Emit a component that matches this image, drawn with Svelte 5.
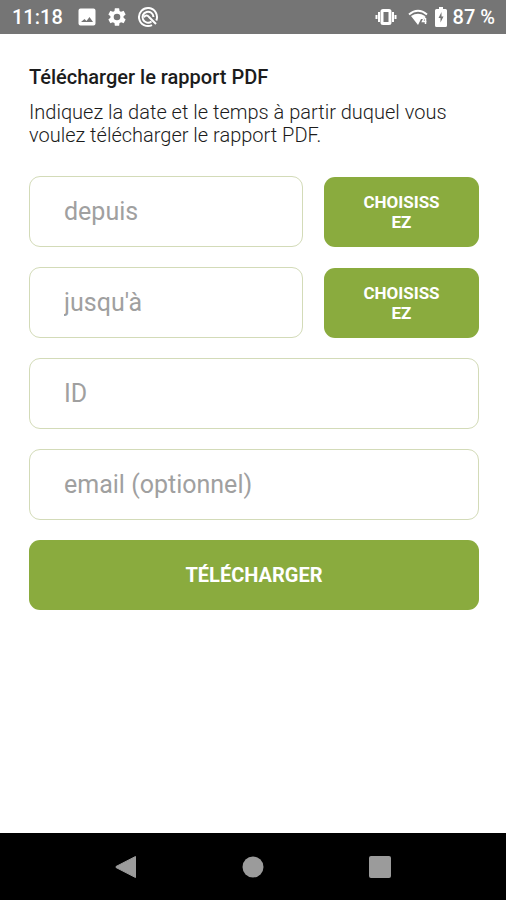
<script lang="ts">
    let from = $state("");
    let to = $state("");
    let id = $state("");
    let email = $state("");
</script>

<div class="screen">
    <header class="status-bar">
        <span class="time">11:18</span>
        <div class="notifications">
            <svg width="20" height="20" viewBox="0 0 20 20" aria-hidden="true">
                <path
                    fill="#fff"
                    fill-rule="evenodd"
                    d="M3.500 1.500h13a2 2 0 0 1 2 2v13a2 2 0 0 1-2 2h-13a2 2 0 0 1-2-2v-13a2 2 0 0 1 2-2zM4 15h12l-3.500-5-3 4-2-2z"
                />
            </svg>
            <svg width="22" height="22" viewBox="0 0 24 24" aria-hidden="true">
                <path
                    fill="#fff"
                    d="M19.14 12.94c.04-.3.06-.61.06-.94s-.02-.64-.07-.94l2.03-1.58a.49.49 0 0 0 .12-.61l-1.92-3.32a.49.49 0 0 0-.59-.22l-2.39.96c-.5-.38-1.03-.7-1.62-.94l-.36-2.54a.48.48 0 0 0-.48-.41h-3.84c-.24 0-.43.17-.47.41l-.36 2.54c-.59.24-1.13.57-1.62.94l-2.39-.96a.48.48 0 0 0-.59.22L2.74 8.87a.47.47 0 0 0 .12.61l2.03 1.58c-.05.3-.09.63-.09.94s.02.64.07.94l-2.03 1.58a.49.49 0 0 0-.12.61l1.92 3.32c.12.22.37.29.59.22l2.39-.96c.5.38 1.03.7 1.62.94l.36 2.54c.05.24.24.41.48.41h3.84c.24 0 .44-.17.47-.41l.36-2.54c.59-.24 1.13-.56 1.62-.94l2.39.96c.22.08.47 0 .59-.22l1.92-3.32a.47.47 0 0 0-.12-.61zM12 15.6a3.6 3.6 0 1 1 0-7.2 3.6 3.6 0 0 1 0 7.2z"
                />
            </svg>
            <svg width="22" height="22" viewBox="0 0 22 22" aria-hidden="true">
                <g fill="none" stroke="#fff" stroke-width="2">
                    <path d="M15 19.1A9 9 0 1 1 19.3 14.5" />
                    <path d="M14.5 15.5A5.5 5.5 0 1 1 16.5 11" />
                    <path d="M7 11.5c1-2.5 3.500-2.500 5-.5l7 7" />
                </g>
            </svg>
        </div>
        <div class="system">
            <svg class="vibrate" width="22" height="20" viewBox="0 0 22 20" aria-hidden="true">
                <rect x="7" y="3.500" width="8" height="13" rx="1" fill="none" stroke="#fff" stroke-width="3" />
                <path d="M4 5v10M18 5v10M1.500 8v4M20.500 8v4" stroke="#fff" stroke-width="2" />
            </svg>
            <svg class="wifi" width="22" height="20" viewBox="0 0 22 20" aria-hidden="true">
                <path d="M2 7.500Q11 0 20 7.500" fill="none" stroke="#fff" stroke-width="2" />
                <path d="M4 9Q11 4.500 18 9L16 12h-2l-3 6z" fill="#fff" />
                <path d="M18 9.500L15.500 14.500h4M18.500 11v6" fill="none" stroke="#fff" stroke-width="1.5" />
            </svg>
            <svg width="12" height="20" viewBox="0 0 12 20" aria-hidden="true">
                <path fill="#fff" d="M4 0h4v2h2.500Q12 2 12 3.500v15Q12 20 10.500 20h-9Q0 20 0 18.500v-15Q0 2 1.500 2H4z" />
                <path fill="#757575" d="M6.500 5L3.500 11h2v4.500L8.500 9.500h-2z" />
            </svg>
            <span>87 %</span>
        </div>
    </header>

    <main>
        <h1>Télécharger le rapport PDF</h1>
        <p>Indiquez la date et le temps à partir duquel vous voulez télécharger le rapport PDF.</p>

        <form onsubmit={(e) => e.preventDefault()}>
            <div class="row">
                <input type="text" bind:value={from} placeholder="depuis" aria-label="depuis" />
                <button type="button" class="choose">CHOISISSEZ</button>
            </div>
            <div class="row">
                <input type="text" bind:value={to} placeholder="jusqu'à" aria-label="jusqu'à" />
                <button type="button" class="choose">CHOISISSEZ</button>
            </div>
            <input type="text" bind:value={id} placeholder="ID" aria-label="ID" />
            <input type="email" bind:value={email} placeholder="email (optionnel)" aria-label="email (optionnel)" />
            <button type="submit" class="submit">TÉLÉCHARGER</button>
        </form>
    </main>

    <nav>
        <button type="button" aria-label="Retour">
            <svg width="24" height="24" viewBox="0 0 24 24" aria-hidden="true">
                <path d="M21.500 1.500v21L2 12.500v-1z" fill="#9b9b9b" stroke="#9b9b9b" stroke-linejoin="round" />
            </svg>
        </button>
        <button type="button" aria-label="Accueil">
            <svg width="24" height="24" viewBox="0 0 24 24" aria-hidden="true">
                <circle cx="12" cy="12" r="10.500" fill="#9b9b9b" />
            </svg>
        </button>
        <button type="button" aria-label="Applications récentes">
            <svg width="24" height="24" viewBox="0 0 24 24" aria-hidden="true">
                <rect x="1" y="1" width="22" height="22" rx="2" fill="#9b9b9b" />
            </svg>
        </button>
    </nav>
</div>

<style>
    :global(body) {
        margin: 0;
        background: #fff;
    }

    .screen {
        display: flex;
        flex-direction: column;
        min-height: 100vh;
        font-family: Roboto, "Liberation Sans", sans-serif;
        color: #1c1c1c;
    }

    .status-bar {
        display: flex;
        align-items: center;
        height: 34px;
        padding: 0 11px 0 12px;
        box-sizing: border-box;
        background: #757575;
        color: #fff;
        font-size: 20px;
        font-weight: 500;
    }

    .status-bar svg {
        display: block;
    }

    .notifications {
        display: flex;
        align-items: center;
        gap: 9px;
        margin-left: 14px;
    }

    .system {
        display: flex;
        align-items: center;
        gap: 6px;
        margin-left: auto;
    }

    .vibrate {
        margin-right: 4px;
    }

    main {
        flex: 1;
        padding: 31px 27px 31px 29px;
    }

    h1 {
        margin: 0 0 12px;
        font-size: 20px;
        line-height: 24px;
        font-weight: 500;
    }

    p {
        margin: 0 0 29px;
        font-size: 20px;
        line-height: 23px;
        font-weight: 300;
    }

    form {
        display: flex;
        flex-direction: column;
        gap: 20px;
    }

    .row {
        display: flex;
        align-items: center;
        gap: 21px;
    }

    input {
        flex: 1 1 auto;
        min-width: 0;
        height: 71px;
        padding: 0 34px;
        box-sizing: border-box;
        border: 1px solid #d3dbb8;
        border-radius: 11px;
        background: #fff;
        color: #1c1c1c;
        font: 400 25px Roboto, "Liberation Sans", sans-serif;
    }

    input::placeholder {
        color: #a0a0a0;
        opacity: 1;
    }

    form > input {
        flex: none;
    }

    .choose,
    .submit {
        height: 70px;
        border: none;
        border-radius: 11px;
        background: #8aab3e;
        color: #fff;
        font-family: inherit;
        font-weight: 700;
        cursor: pointer;
    }

    .choose {
        flex: none;
        width: 155px;
        padding: 0 36px;
        font-size: 17px;
        line-height: 20px;
        word-break: break-all;
    }

    .submit {
        font-size: 20px;
    }

    nav {
        display: flex;
        align-items: center;
        height: 67px;
        padding: 0 63px;
        background: #000;
    }

    nav button {
        display: flex;
        flex: 1;
        justify-content: center;
        height: 24px;
        padding: 0;
        border: none;
        background: none;
        cursor: pointer;
    }
</style>
